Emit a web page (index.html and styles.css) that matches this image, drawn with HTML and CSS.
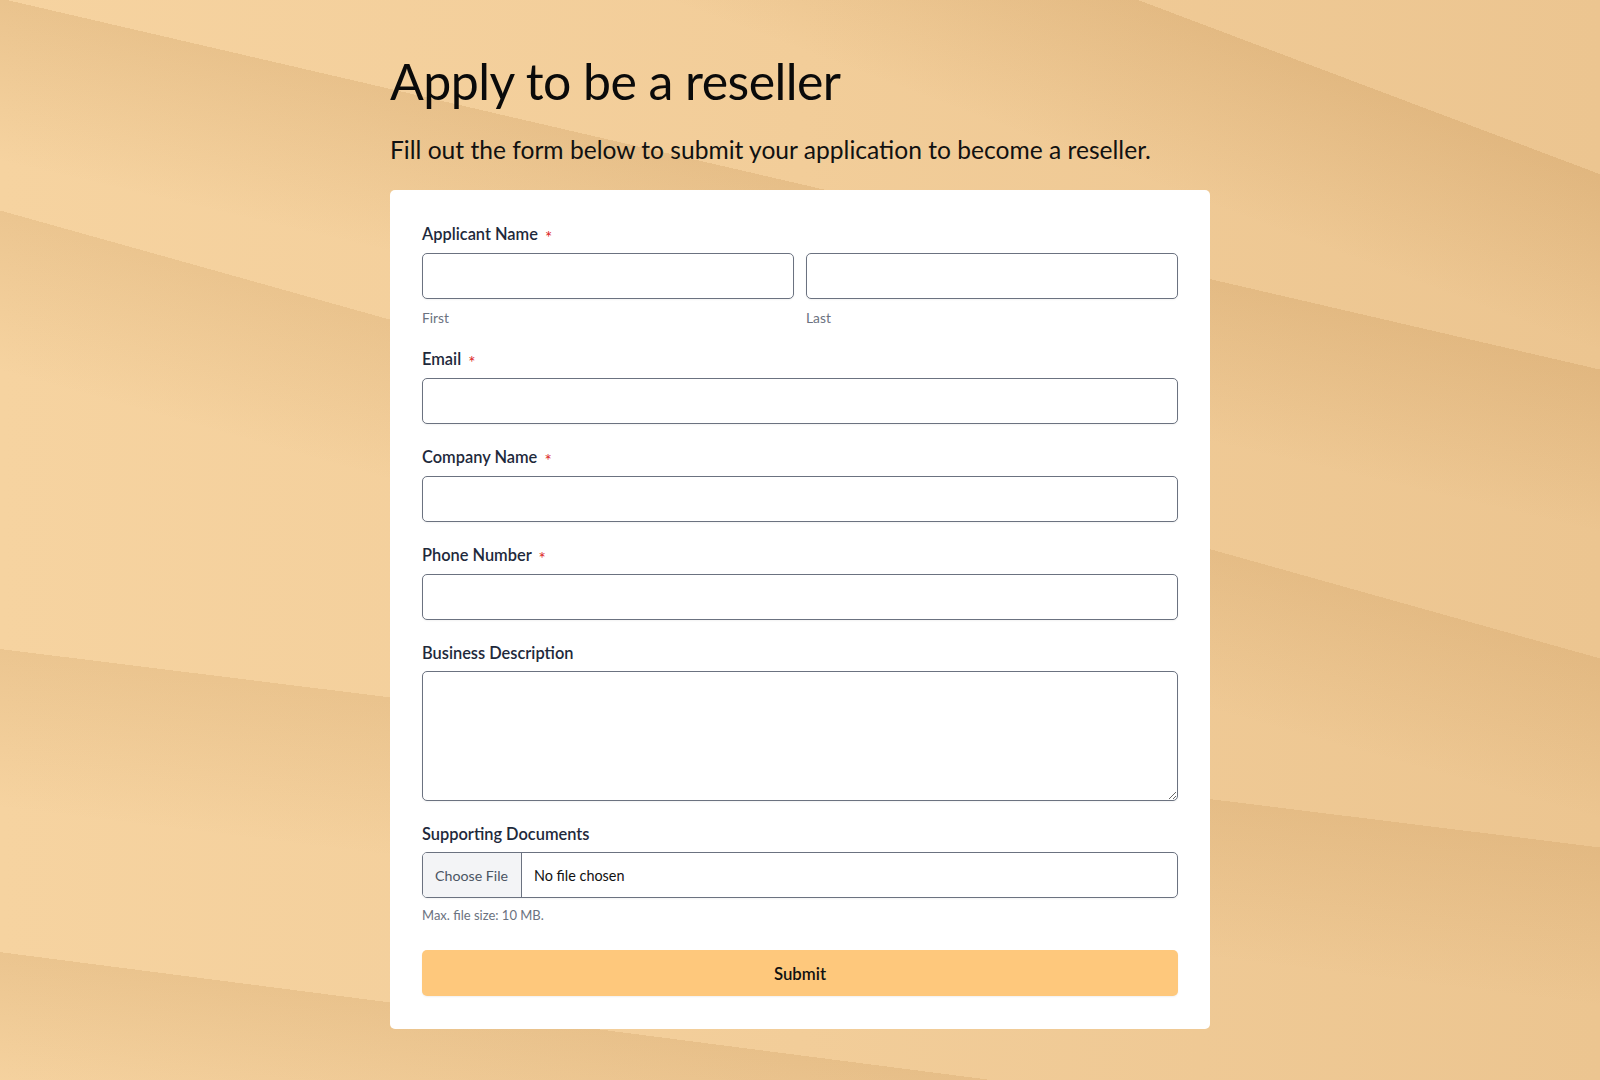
FILE: index.html
```html
<!DOCTYPE html>
<html lang="en">
<head>
<meta charset="utf-8">
<title>Apply to be a reseller</title>
<link rel="stylesheet" href="styles.css">
</head>
<body>
<div class="page">
  <main class="wrap">
    <h1 class="title">Apply to be a reseller</h1>
    <p class="lead">Fill out the form below to submit your application to become a reseller.</p>
    <form class="card">
      <div class="field">
        <div class="label label-req">Applicant Name <span class="req">*</span></div>
        <div class="name-row">
          <div class="name-col">
            <input class="input" type="text">
            <div class="sub">First</div>
          </div>
          <div class="name-col">
            <input class="input" type="text">
            <div class="sub">Last</div>
          </div>
        </div>
      </div>
      <div class="field">
        <label class="label label-req">Email <span class="req">*</span></label>
        <input class="input" type="email">
      </div>
      <div class="field">
        <label class="label label-req">Company Name <span class="req">*</span></label>
        <input class="input" type="text">
      </div>
      <div class="field">
        <label class="label label-req">Phone Number <span class="req">*</span></label>
        <input class="input" type="tel">
      </div>
      <div class="field">
        <label class="label">Business Description</label>
        <textarea class="input area"></textarea>
      </div>
      <div class="field field-file">
        <div class="label">Supporting Documents</div>
        <label class="file">
          <span class="file-btn">Choose File</span>
          <span class="file-name">No file chosen</span>
          <input class="file-input" type="file">
        </label>
        <div class="hint">Max. file size: 10 MB.</div>
      </div>
      <button class="submit" type="button">Submit</button>
    </form>
  </main>
</div>
</body>
</html>
```

FILE: styles.css
```css
* { box-sizing: border-box; }

html, body {
  margin: 0;
  padding: 0;
}

body {
  font-family: Lato, "Noto Sans", sans-serif;
  color: #111;
}

.page {
  min-height: 1080px;
  background-color: #f1cc98;
  background-image:
    linear-gradient(200.66deg, rgba(160,100,30,0) 163px, rgba(160,100,30,0.15) 163px, rgba(160,100,30,0) 330px),
    linear-gradient(193.06deg, rgba(160,100,30,0) 360px, rgba(160,100,30,0.14) 360px, rgba(160,100,30,0) 520px),
    linear-gradient(195.64deg, rgba(160,100,30,0) 634px, rgba(160,100,30,0.12) 634px, rgba(160,100,30,0) 790px),
    linear-gradient(187.07deg, rgba(160,100,30,0) 841px, rgba(160,100,30,0.12) 841px, rgba(160,100,30,0) 1000px),
    linear-gradient(187.35deg, rgba(160,100,30,0) 1149px, rgba(160,100,30,0.13) 1149px, rgba(160,100,30,0) 1290px),
    linear-gradient(90deg, #f6d3a0 0%, #f2cd99 50%, #ecc590 100%);
  background-size: 1600px 1080px;
  background-repeat: no-repeat;
}

.wrap {
  width: 820px;
  margin: 0 auto;
  padding-top: 51px;
  padding-bottom: 51px;
}

.title {
  margin: 0;
  font-family: Lato, sans-serif;
  font-weight: 400;
  font-size: 50px;
  line-height: 60px;
  letter-spacing: -0.55px;
  color: #0a0a0a;
}

.lead {
  margin: 24px 0 25px;
  font-size: 24.6px;
  line-height: 30px;
  color: #111;
}

.card {
  background: #fff;
  border-radius: 5px;
  padding: 34px 32px 33px;
  display: flex;
  flex-direction: column;
}

.field {
  display: flex;
  flex-direction: column;
  margin-bottom: 23px;
}

.label {
  font-size: 16.4px;
  line-height: 20px;
  height: 20px;
  font-weight: 600;
  color: #1e293b;
  margin-bottom: 8px;
}

.label-req {
  margin-bottom: 9px;
}

.req {
  color: #dc2626;
  font-size: 17px;
  font-weight: 400;
  line-height: 0;
  margin-left: 3px;
  position: relative;
  top: 4px;
}

.name-row {
  display: grid;
  grid-template-columns: 1fr 1fr;
  gap: 12px;
}

.name-col {
  display: flex;
  flex-direction: column;
}

.input {
  display: block;
  width: 100%;
  height: 46px;
  border: 1px solid #6b7280;
  border-radius: 5px;
  background: #fff;
  box-shadow: 0 1px 2px rgba(0,0,0,0.05);
  font-family: Lato, sans-serif;
  font-size: 15px;
  padding: 0 12px;
  margin: 0;
}

.area {
  height: 130px;
  resize: vertical;
  padding: 10px 12px;
}

.sub {
  margin-top: 11px;
  font-size: 13.8px;
  line-height: 16px;
  color: #6b7280;
}

.file {
  display: flex;
  align-items: center;
  height: 46px;
  border: 1px solid #6b7280;
  border-radius: 5px;
  overflow: hidden;
  box-shadow: 0 1px 2px rgba(0,0,0,0.05);
  cursor: pointer;
}

.file-btn {
  display: flex;
  align-items: center;
  height: 100%;
  padding: 0 13px 0 12px;
  background: #f3f4f6;
  border-right: 1px solid #6b7280;
  font-size: 14.2px;
  color: #4b5563;
}

.file-name {
  margin-left: 12px;
  font-size: 14.4px;
  color: #111;
}

.file-input {
  display: none;
}

.hint {
  margin-top: 9px;
  font-size: 13px;
  line-height: 16px;
  color: #6b7280;
}

.field-file {
  margin-bottom: 27px;
}

.submit {
  display: block;
  width: 100%;
  height: 46px;
  border: 0;
  border-radius: 5px;
  background: #fec87c;
  box-shadow: 0 1px 2px rgba(0,0,0,0.06);
  font-family: Lato, sans-serif;
  font-size: 16.8px;
  font-weight: 600;
  color: #111;
  cursor: pointer;
}
```
